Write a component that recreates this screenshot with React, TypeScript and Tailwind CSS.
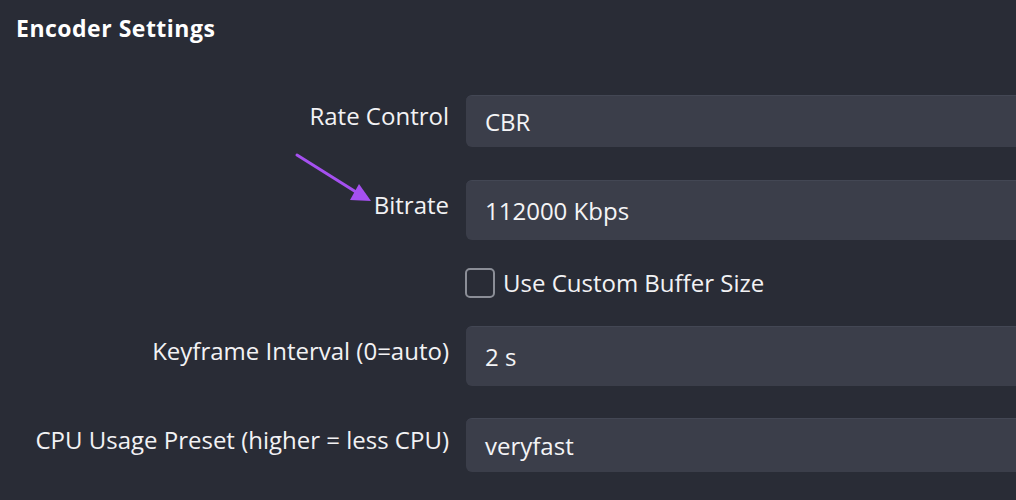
const font = { fontFamily: '"Open Sans", "Noto Sans", sans-serif' };

const Row = ({ label, value, h, mt }: { label: string; value: string; h: string; mt: string }) => (
  <div className={`flex items-center ${mt}`}>
    <div className="w-[449px] shrink-0 text-right text-[24px] text-[#f2f2f4] -translate-y-[5px]">{label}</div>
    <div
      className={`ml-[17px] w-[620px] shrink-0 ${h} bg-[#3b3e4a] border-t border-[#434754] rounded-[6px] flex items-center pl-[19px] text-[24px] text-[#f4f4f6]`}
    >
      {value}
    </div>
  </div>
);

export default function App() {
  return (
    <div className="w-[1016px] h-[500px] overflow-hidden bg-[#292c36] relative" style={font}>
      <div className="pl-[16px] pt-[12px] text-[23px] leading-[32px] font-bold text-white tracking-[0.5px]">Encoder Settings</div>

      <div className="flex flex-col">
        <Row label="Rate Control" value="CBR" h="h-[52px]" mt="mt-[51px]" />
        <Row label="Bitrate" value="112000 Kbps" h="h-[60px]" mt="mt-[33px]" />

        <div className="flex items-center h-[30px] mt-[28px] ml-[465px]">
          <div className="w-[30px] h-[30px] rounded-[5px] border-2 border-[#8b8e97]" />
          <span className="ml-[8px] text-[24px] leading-[30px] text-[#f2f2f4]">Use Custom Buffer Size</span>
        </div>

        <Row label="Keyframe Interval (0=auto)" value="2 s" h="h-[60px]" mt="mt-[28px]" />
        <Row label="CPU Usage Preset (higher = less CPU)" value="veryfast" h="h-[54px]" mt="mt-[32px]" />
      </div>

      {/* annotation arrow */}
      <svg className="absolute left-0 top-0 pointer-events-none" width="1016" height="500">
        <line x1="297" y1="155" x2="356" y2="192" stroke="#a550f0" strokeWidth="3" strokeLinecap="round" />
        <polygon points="371,201 350,200 359,184" fill="#a550f0" />
      </svg>
    </div>
  );
}
